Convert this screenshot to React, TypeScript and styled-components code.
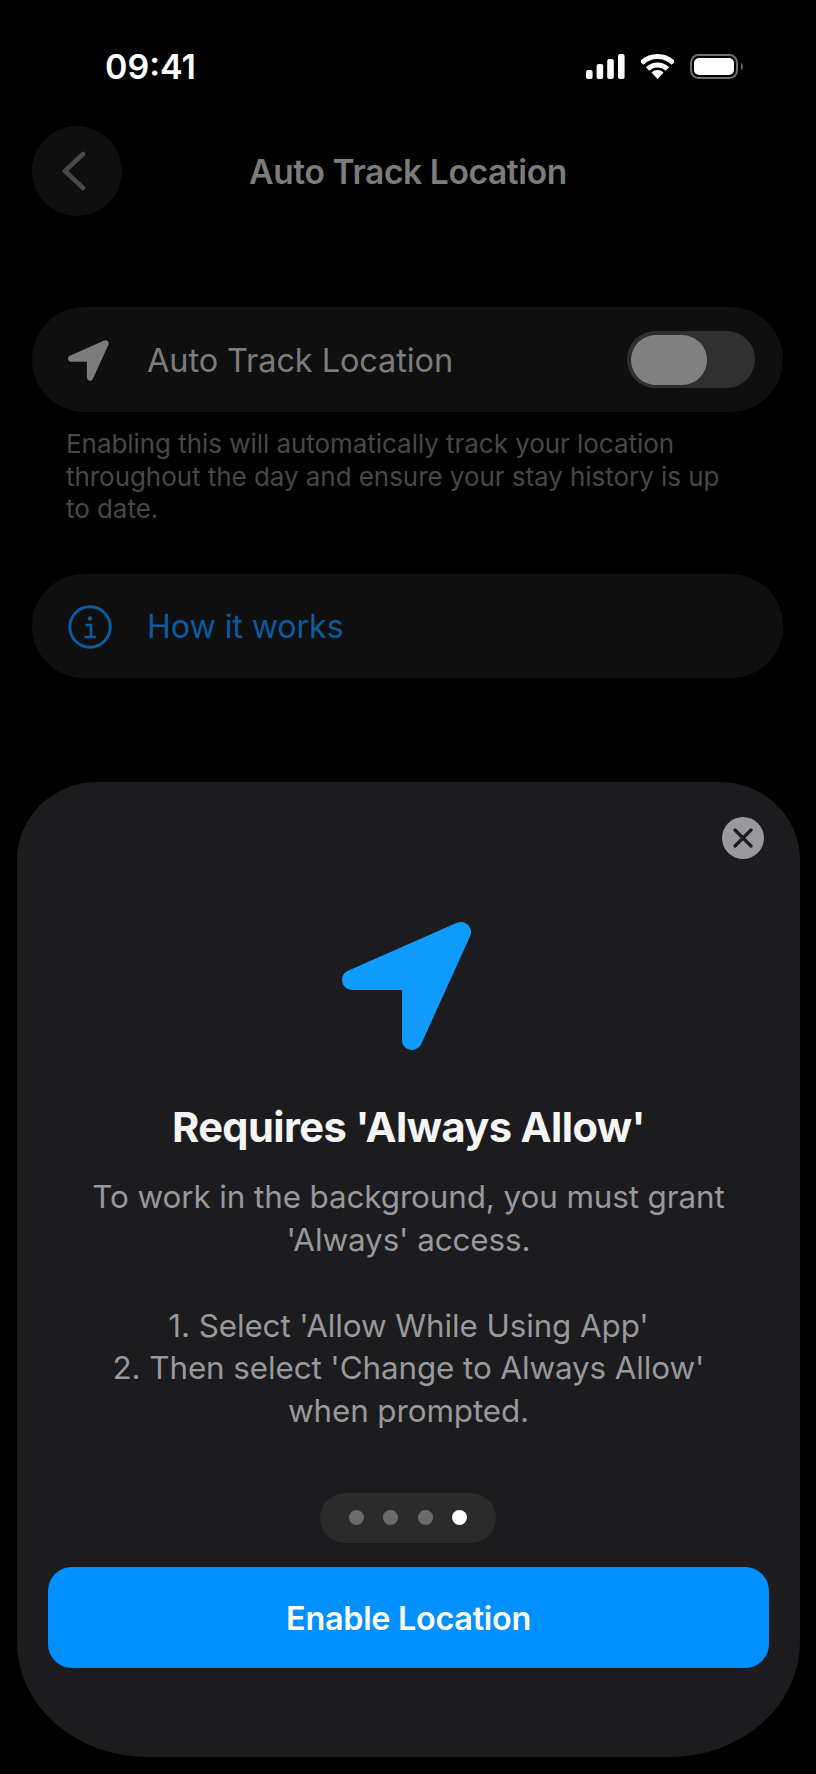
import styled, { createGlobalStyle } from 'styled-components'

const GlobalStyle = createGlobalStyle`
  html, body {
    margin: 0;
    padding: 0;
    background: #000;
  }
  * {
    box-sizing: border-box;
  }
`

const Page = styled.main`
  width: 816px;
  height: 1774px;
  background: #000;
  font-family: Inter, "Liberation Sans", sans-serif;
  overflow: hidden;
`

const StatusBar = styled.div`
  display: flex;
  align-items: center;
  justify-content: space-between;
  height: 26px;
  margin-top: 53px;
  padding: 0 71px 0 105px;
`

const Time = styled.span`
  padding-top: 2px;
  color: #fff;
  font-size: 34px;
  font-weight: 600;
  line-height: 26px;
`

const StatusIcons = styled.div`
  display: flex;
  align-items: center;
  gap: 16px;
`

const Header = styled.header`
  display: grid;
  grid-template-columns: 90px 1fr 90px;
  align-items: center;
  width: 816px;
  height: 90px;
  margin-top: 47px;
  padding: 0 32px;
`

const BackButton = styled.button`
  display: flex;
  align-items: center;
  justify-content: center;
  width: 90px;
  height: 90px;
  padding: 0 8px 0 0;
  border: none;
  border-radius: 50%;
  background: #0f0f0f;
`

const Title = styled.h1`
  margin: 0;
  color: #7c7c7c;
  font-size: 33.6px;
  font-weight: 600;
  letter-spacing: -0.4px;
  text-align: center;
`

const Content = styled.section`
  margin-top: 91px;
  padding: 0 33px 0 32px;
`

const Row = styled.div<{ $height: number }>`
  display: flex;
  align-items: center;
  height: ${(p) => p.$height}px;
  padding: 0 28px 0 36px;
  border-radius: 53px;
  background: #0f0f0f;
`

const RowIcon = styled.div`
  display: flex;
  align-items: center;
  width: 79px;
  padding-top: 1px;
  flex-shrink: 0;
`

const RowLabel = styled.span<{ $link?: boolean }>`
  flex: 1;
  padding-top: 1px;
  color: ${(p) => (p.$link ? '#0a5ba0' : '#7c7c7c')};
  font-size: ${(p) => (p.$link ? '32.2px' : '32.5px')};
  font-weight: 400;
  letter-spacing: -0.1px;
`

const Toggle = styled.div`
  display: flex;
  align-items: center;
  width: 128px;
  height: 57px;
  padding: 0 4px;
  border-radius: 29px;
  background: #303030;
`

const ToggleThumb = styled.span`
  width: 76px;
  height: 50px;
  border-radius: 25px;
  background: #808080;
`

const Hint = styled.p`
  margin: 16px 0 48px;
  padding: 0 40px 0 34px;
  color: #484848;
  font-size: 26px;
  line-height: 32.7px;
  letter-spacing: -0.05px;
`

const Sheet = styled.section`
  display: flex;
  flex-direction: column;
  align-items: center;
  width: 783px;
  height: 975px;
  margin: 104px 0 0 17px;
  padding: 35px 31px 0;
  border-radius: 80px 80px 130px 130px / 78px 78px 115px 115px;
  background: #1c1c1e;
`

const CloseButton = styled.button`
  display: flex;
  align-items: center;
  justify-content: center;
  align-self: flex-end;
  width: 42px;
  height: 42px;
  margin: 0 5px 1px 0;
  padding: 0;
  border: none;
  border-radius: 50%;
  background: #9a9a9e;
`

const HeroIcon = styled.div`
  display: flex;
  height: 128px;
  margin: 61px 3px 0 0;
`

const SheetTitle = styled.h2`
  margin: 54px 0 0;
  color: #f5f5f5;
  font-size: 41.6px;
  font-weight: 700;
  line-height: 48px;
  letter-spacing: -0.6px;
  text-align: center;
`

const SheetText = styled.p`
  margin: 25px 0 0;
  color: #98989d;
  font-size: 31.4px;
  line-height: 42.8px;
  letter-spacing: -0.1px;
  text-align: center;
  white-space: nowrap;
`

const Pager = styled.div`
  display: flex;
  align-items: center;
  justify-content: center;
  gap: 19.5px;
  width: 176px;
  height: 50px;
  margin: 60px 1px 0 0;
  border-radius: 25px;
  background: #2b2b2b;
`

const Dot = styled.span<{ $active?: boolean }>`
  width: 15px;
  height: 15px;
  border-radius: 50%;
  background: ${(p) => (p.$active ? '#fff' : '#6c6c6c')};
`

const EnableButton = styled.button`
  width: 721px;
  height: 101px;
  margin-top: 24px;
  padding: 2px 0 0;
  border: none;
  border-radius: 24px;
  background: #0090ff;
  color: #fff;
  font-family: inherit;
  font-size: 32.4px;
  font-weight: 600;
  letter-spacing: -0.3px;
`

const Arrow = ({ size, color }: { size: number; color: string }) => (
  <svg width={size} height={size} viewBox="0 0 130 128">
    <path
      d="M10 58 L119 10 L70 118 L70 58 Z"
      fill={color}
      stroke={color}
      strokeWidth="20"
      strokeLinejoin="round"
    />
  </svg>
)

const Signal = () => (
  <svg width="39" height="25" viewBox="0 0 39 25" fill="#fff">
    <rect x="0" y="16" width="6.6" height="9" rx="2" />
    <rect x="10.6" y="10" width="6.6" height="15" rx="2" />
    <rect x="21.2" y="5" width="6.6" height="20" rx="2" />
    <rect x="32" y="0" width="6.6" height="25" rx="2" />
  </svg>
)

const Wifi = () => (
  <svg width="33" height="25" viewBox="0 0 33 25" fill="none">
    <path d="M0.6 9.1 A22.5 22.5 0 0 1 32.4 9.1" stroke="#fff" strokeWidth="5" />
    <path d="M6.6 15.1 A14 14 0 0 1 26.4 15.1" stroke="#fff" strokeWidth="5" />
    <path d="M16.5 25 L10.5 18.5 A8.5 8.5 0 0 1 22.5 18.5 Z" fill="#fff" />
  </svg>
)

const Battery = () => (
  <svg width="55" height="25" viewBox="0 0 55 25" fill="none">
    <rect x="1" y="1" width="46" height="23" rx="7.5" stroke="#6e6e6e" strokeWidth="2" />
    <rect x="4" y="4" width="40" height="17" rx="5" fill="#fff" />
    <path d="M51 9 C53.5 10 53.5 15 51 16 Z" fill="#6e6e6e" />
  </svg>
)

const InfoIcon = () => (
  <svg width="44" height="44" viewBox="0 0 44 44" fill="none" stroke="#0a5ba0">
    <circle cx="22" cy="22" r="20.2" strokeWidth="3" />
    <circle cx="22" cy="13.5" r="2.2" fill="#0a5ba0" stroke="none" />
    <path d="M17.5 20 H23 V32 M16.5 32 H28" strokeWidth="2.6" />
  </svg>
)

const App = () => {
  const dots = [false, false, false, true]
  return (
    <Page>
      <GlobalStyle />
      <StatusBar>
        <Time>09:41</Time>
        <StatusIcons>
          <Signal />
          <Wifi />
          <Battery />
        </StatusIcons>
      </StatusBar>
      <Header>
        <BackButton aria-label="Back">
          <svg width="27" height="40" viewBox="0 0 27 40" fill="none">
            <path d="M23 3 L5 20 L23 37" stroke="#4a4a4a" strokeWidth="4.5" strokeLinecap="round" strokeLinejoin="round" />
          </svg>
        </BackButton>
        <Title>Auto Track Location</Title>
      </Header>
      <Content>
        <Row $height={105}>
          <RowIcon>
            <Arrow size={41} color="#7c7c7c" />
          </RowIcon>
          <RowLabel>Auto Track Location</RowLabel>
          <Toggle>
            <ToggleThumb />
          </Toggle>
        </Row>
        <Hint>
          Enabling this will automatically track your location
          <br />
          throughout the day and ensure your stay history is up
          <br />
          to date.
        </Hint>
        <Row $height={104}>
          <RowIcon>
            <InfoIcon />
          </RowIcon>
          <RowLabel $link>How it works</RowLabel>
        </Row>
      </Content>
      <Sheet>
        <CloseButton aria-label="Close">
          <svg width="20" height="20" viewBox="0 0 20 20" fill="none">
            <path d="M2 2 L18 18 M18 2 L2 18" stroke="#1c1c1e" strokeWidth="3.2" strokeLinecap="round" />
          </svg>
        </CloseButton>
        <HeroIcon>
          <Arrow size={130} color="#0f9bff" />
        </HeroIcon>
        <SheetTitle>Requires 'Always Allow'</SheetTitle>
        <SheetText>
          To work in the background, you must grant
          <br />
          'Always' access.
          <br />
          <br />
          1. Select 'Allow While Using App'
          <br />
          2. Then select 'Change to Always Allow'
          <br />
          when prompted.
        </SheetText>
        <Pager>
          {dots.map((active, i) => (
            <Dot key={i} $active={active} />
          ))}
        </Pager>
        <EnableButton>Enable Location</EnableButton>
      </Sheet>
    </Page>
  )
}

export default App
